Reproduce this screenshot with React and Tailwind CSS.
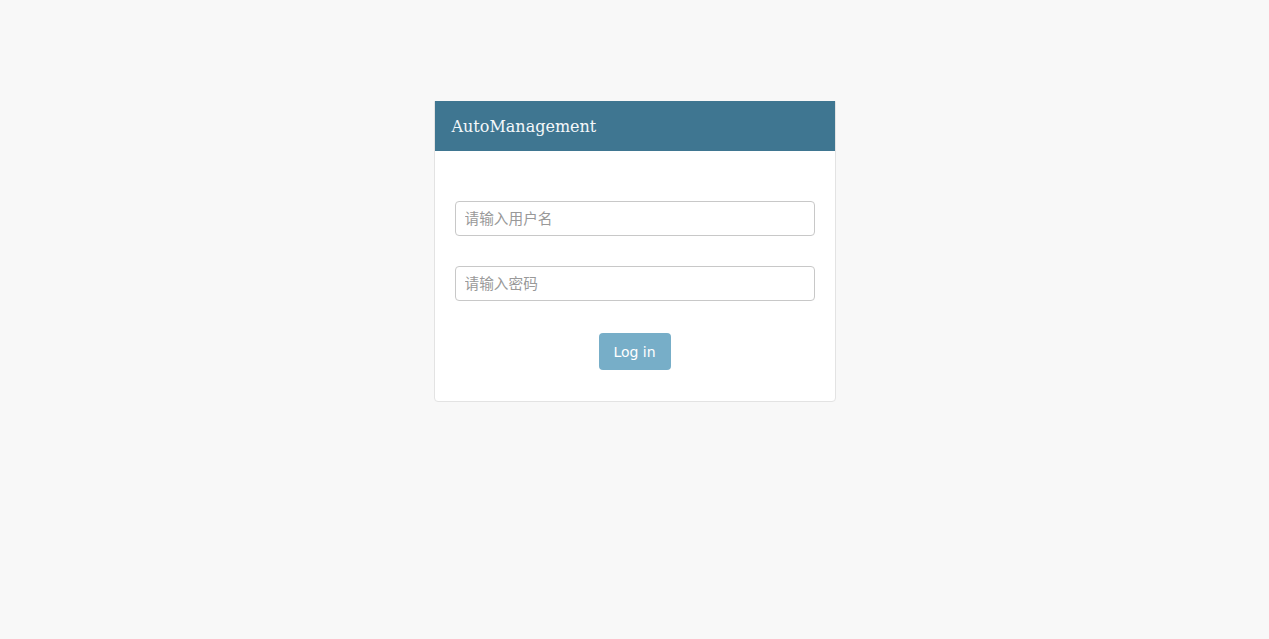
import React, { useState } from 'react';

const App = () => {
    const [username, setUsername] = useState('');
    const [password, setPassword] = useState('');

    return (
        <div className="min-h-screen bg-[#f8f8f8] pt-[101px] font-['DejaVu_Sans','Noto_Sans_CJK_SC',sans-serif]">
            <div className="mx-auto w-[402px] bg-white border border-[#e3e3e3] rounded-b-[4px]">
                {/* Header */}
                <div className="h-[50px] -mt-px bg-[#3f7691] flex items-center pl-[17px] pr-[16px] pt-[2px]">
                    <h1 className="text-[16px] text-[#f4f8fa] font-['DejaVu_Serif',serif]">AutoManagement</h1>
                </div>

                {/* Form */}
                <form onSubmit={(e) => e.preventDefault()} className="px-[20px] pt-[50px] pb-[31px] flex flex-col">
                    <input
                        type="text"
                        value={username}
                        onChange={(e) => setUsername(e.target.value)}
                        placeholder="请输入用户名"
                        className="h-[35px] w-full border border-[#c8c8c8] rounded-[4px] px-[9px] text-[11pt] text-[#555] placeholder-[#999] outline-none font-['DejaVu_Sans','Noto_Sans_CJK_SC',sans-serif]"
                    />
                    <input
                        type="password"
                        value={password}
                        onChange={(e) => setPassword(e.target.value)}
                        placeholder="请输入密码"
                        className="mt-[30px] h-[35px] w-full border border-[#c8c8c8] rounded-[4px] px-[9px] text-[11pt] text-[#555] placeholder-[#999] outline-none font-['DejaVu_Sans','Noto_Sans_CJK_SC',sans-serif]"
                    />
                    <div className="mt-[32px] flex justify-center">
                        <button
                            type="submit"
                            className="w-[72px] h-[37px] pt-[2px] bg-[#77aec8] text-white text-[14px] rounded-[4px]"
                        >
                            Log in
                        </button>
                    </div>
                </form>
            </div>
        </div>
    );
};

export default App;
